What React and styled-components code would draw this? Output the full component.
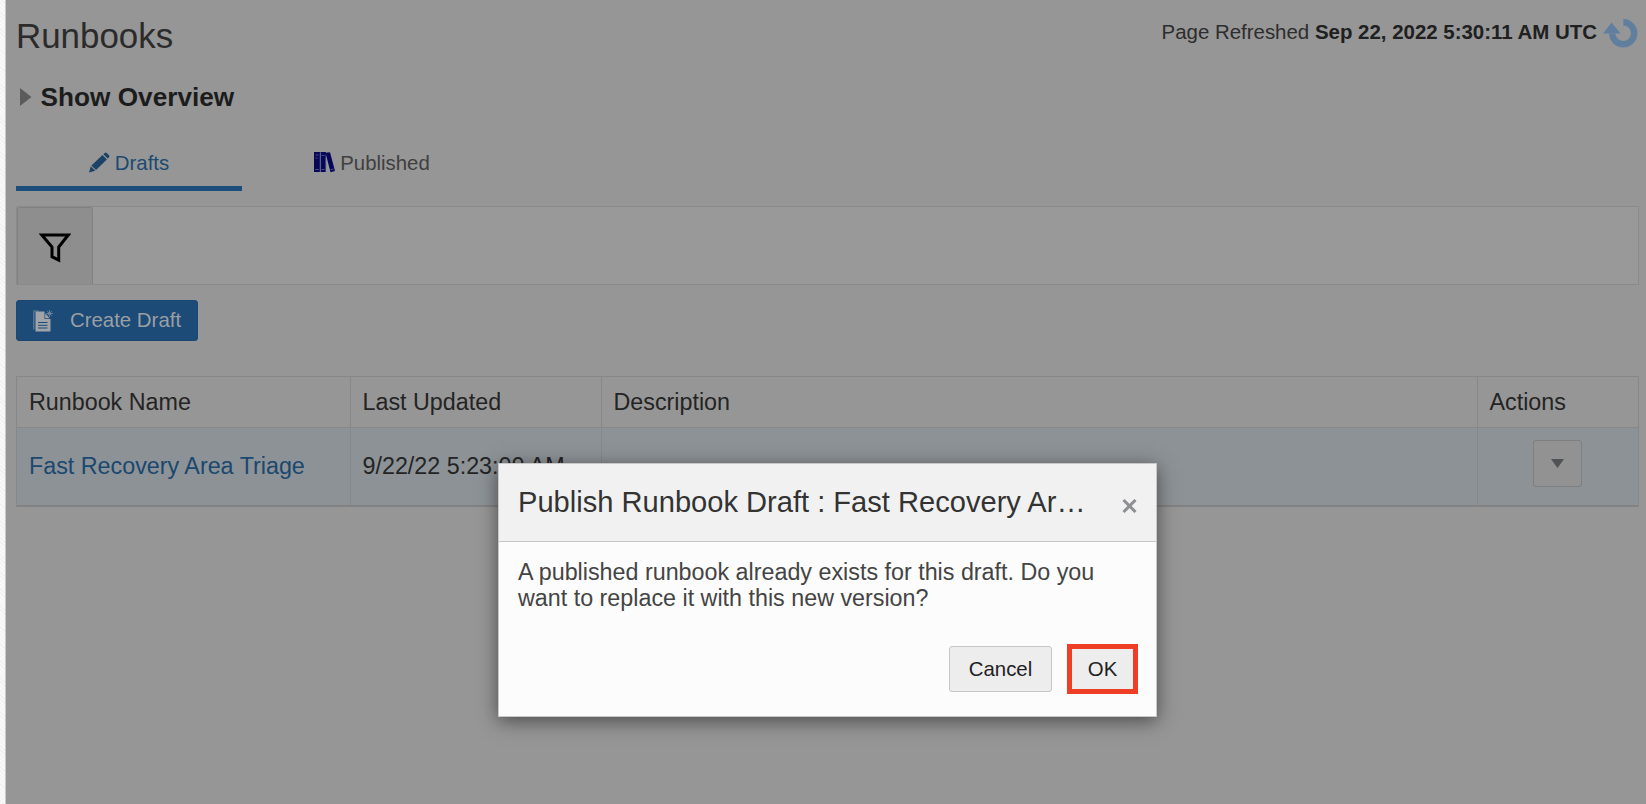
import React from "react";
import styled, { createGlobalStyle } from "styled-components";

const Global = createGlobalStyle`
  * { box-sizing: border-box; }
  html, body { margin: 0; height: 100%; overflow: hidden; background: #969696; }
  body, button { font-family: "Liberation Sans", Arial, sans-serif; }
`;

const Screen = styled.div`
  position: relative;
  display: flex;
  width: 1646px;
  height: 804px;
  background: #969696;
  overflow: hidden;
`;
const Gutter = styled.div`
  flex: 0 0 6px;
  background: repeating-linear-gradient(45deg, #f9f9f9 0 2px, #f1f1f1 2px 3px);
  border-right: 1px solid #c8c8c8;
`;
const Main = styled.main`
  flex: 1;
  display: flex;
  flex-direction: column;
  padding: 0 7px 0 10px;
`;
const Header = styled.header`
  display: flex;
  justify-content: space-between;
  height: 74px;
`;
const Title = styled.h1`
  margin: 16px 0 0;
  font-size: 34.9px;
  line-height: 40px;
  font-weight: 400;
  color: #2b2b2b;
`;
const Refreshed = styled.div`
  display: flex;
  height: 34px;
  margin-top: 16px;
  font-size: 20.45px;
  line-height: 32px;
  color: #2d2d2d;
  white-space: pre;
  b { color: #202020; }
  svg { margin: 2px 1px 0 6px; }
`;
const Overview = styled.div`
  display: flex;
  align-items: center;
  height: 46px;
  padding-left: 4px;
  gap: 8.6px;
  font-size: 26.2px;
  font-weight: 700;
  color: #1c1c1c;
`;
const Tabs = styled.nav`
  display: flex;
  height: 71px;
  padding-top: 22px;
  gap: 17px;
`;
const Tab = styled.div`
  display: flex;
  justify-content: center;
  width: 226px;
  height: 49px;
  padding: 9px 0 0;
  gap: 5px;
  font-size: 20.4px;
  line-height: 25px;
  color: ${(p) => (p.$active ? "#1c4a70" : "#404040")};
  border-bottom: 5px solid ${(p) => (p.$active ? "#1c4e7c" : "transparent")};
  svg { margin-top: 1px; }
`;
const FilterBar = styled.div`
  display: flex;
  flex: none;
  height: 79px;
  margin-top: 15px;
  border: 1px solid #8a8a8a;
  background: #999;
`;
const FilterButton = styled.div`
  display: flex;
  width: 76px;
  padding-top: 3px;
  align-items: center;
  justify-content: center;
  background: #8e8e8e;
  border: 1px solid #818181;
  border-bottom: 0;
  border-radius: 3px 3px 0 0;
`;
const CreateButton = styled.button`
  display: flex;
  align-items: center;
  width: 182px;
  height: 41px;
  margin: 15px 0 0;
  padding: 0 0 0 16px;
  gap: 17px;
  border: 1px solid #1a4772;
  border-radius: 3px;
  background: #1c4b77;
  color: #9b9fa3;
  font-size: 20.4px;
  white-space: nowrap;
`;
const Table = styled.div`
  margin-top: 35px;
  border: 1px solid #878787;
  border-bottom: 2px solid #828282;
`;
const Row = styled.div`
  display: grid;
  grid-template-columns: 333.5px 251px 876px 1fr;
  height: ${(p) => (p.$head ? 51 : 77)}px;
  background: ${(p) => (p.$head ? "#969696" : "#8d9296")};
  border-bottom: ${(p) => (p.$head ? "1px solid #878787" : "0")};
`;
const Cell = styled.div`
  display: flex;
  align-items: center;
  justify-content: ${(p) => (p.$center ? "center" : "flex-start")};
  padding: 0 12px;
  border-right: 1px solid #868788;
  font-size: 23.3px;
  white-space: nowrap;
  color: ${(p) => (p.$link ? "#1a486f" : "#242424")};
  &:last-child { border-right: 0; }
`;
const MenuButton = styled.button`
  display: flex;
  align-items: center;
  justify-content: center;
  width: 49px;
  height: 47px;
  margin-bottom: 6px;
  padding: 0;
  border: 1px solid #7f7f7f;
  border-radius: 3px;
  background: #929292;
`;
const Dialog = styled.section`
  position: absolute;
  left: 498px;
  top: 463px;
  width: 659px;
  height: 254px;
  border: 1px solid #c8c8c8;
  background: #fcfcfc;
  box-shadow: 0 4px 18px rgba(0, 0, 0, 0.5);
`;
const DialogHeader = styled.div`
  display: flex;
  height: 78px;
  padding: 0 19px;
  justify-content: space-between;
  border-bottom: 1px solid #c7c7c7;
  background: #f1f1f1;
`;
const DialogTitle = styled.h2`
  margin: 21px 0 0;
  font-size: 29.1px;
  line-height: 34px;
  font-weight: 400;
  color: #333;
  white-space: nowrap;
`;
const Close = styled.svg`
  margin-top: 35px;
`;
const Message = styled.p`
  margin: 17px 19px 0;
  height: 87px;
  font-size: 23.3px;
  line-height: 26px;
  color: #444;
  white-space: nowrap;
`;
const Actions = styled.div`
  display: flex;
  align-items: center;
  justify-content: flex-end;
  gap: 15px;
  height: 50px;
  margin-top: -2px;
  padding-right: 18px;
`;
const DialogButton = styled.button`
  width: ${(p) => (p.$primary ? 71 : 103)}px;
  height: ${(p) => (p.$primary ? 50 : 46)}px;
  padding: 0;
  border: ${(p) => (p.$primary ? "5px solid #ee3f26" : "1px solid #c6c6c6")};
  border-radius: ${(p) => (p.$primary ? 0 : 3)}px;
  background: #ededed;
  color: #222;
  font-size: 20.4px;
`;

const columns = ["Runbook Name", "Last Updated", "Description", "Actions"];

const RefreshIcon = () => (
  <svg width="35" height="30" viewBox="0 0 35 30">
    <path d="M20.3 4.2A11 11 0 1 1 9.2 15.5" fill="none" stroke="#607f9e" strokeWidth="6.4" />
    <path d="M0 15.5L8.6 4.5l9 11z" fill="#607f9e" />
  </svg>
);
const PencilIcon = () => (
  <svg width="21" height="21" viewBox="0 0 21 21" fill="#1b4368">
    <path d="M0 20.5L1.8 14.3 6.3 18.8z" />
    <path d="M2.4 13.5L13.5 3l4.4 4.4L7 18z" />
    <path d="M14.4 2.2L15.7.9Q16.7 0 17.7 1L20 3.3Q21 4.2 20 5.2L18.7 6.5z" />
  </svg>
);
const BooksIcon = () => (
  <svg width="21" height="21" viewBox="0 0 21 21">
    <path d="M0 0h6v20H0zM6.5 0h5.3v20H6.5zM11.5 .8l4.5-.6L21 19l-4.5 1.3z" fill="#07075a" />
    <path d="M1.5 3h3M1.5 6h2M1 17.5h4M7.5 3.5h3M7.5 17.5h3M16.5 17.7l3-.7" stroke="#66669a" strokeWidth=".7" />
    <path d="M6.2 1v19M12 5v15" stroke="#777797" strokeWidth=".6" />
  </svg>
);
const FilterIcon = () => (
  <svg width="32" height="30" viewBox="0 0 32 30">
    <path d="M2.8 2h26.4L19.7 14v13L13 23.7V14z" fill="none" stroke="#000" strokeWidth="3" />
  </svg>
);
const DraftIcon = () => (
  <svg width="20" height="22" viewBox="0 0 20 22">
    <path d="M.8 19.5V1h5" fill="none" stroke="#607f9a" strokeWidth="1.2" />
    <path d="M2.5 1.5h9v7.5h6v12.5h-15z" fill="#a0a4a8" />
    <path d="M12.2 3.5l4.5 4.7h-4.5z" fill="#a0a4a8" />
    <path d="M16.5 0v7M13 3.5h7M14.3 1.3l4.4 4.4M18.7 1.3l-4.4 4.4" stroke="#71889f" strokeWidth=".9" />
    <path d="M5 12.5h9.5M5 15.3h9.5M5 18h9.5" stroke="#1c4b77" strokeWidth="1" />
  </svg>
);

export default function App() {
  return (
    <Screen>
      <Global />
      <Gutter />
      <Main>
        <Header>
          <Title>Runbooks</Title>
          <Refreshed>
            <span>Page Refreshed <b>Sep 22, 2022 5:30:11 AM UTC</b></span>
            <RefreshIcon />
          </Refreshed>
        </Header>
        <Overview>
          <svg width="12" height="20" viewBox="0 0 12 20"><path d="M0 1l11.5 9L0 19z" fill="#5b5b5b" /></svg>
          Show Overview
        </Overview>
        <Tabs>
          <Tab $active><PencilIcon />Drafts</Tab>
          <Tab><BooksIcon />Published</Tab>
        </Tabs>
        <FilterBar><FilterButton><FilterIcon /></FilterButton></FilterBar>
        <CreateButton><DraftIcon />Create Draft</CreateButton>
        <Table>
          <Row $head>{columns.map((name) => <Cell key={name}>{name}</Cell>)}</Row>
          <Row>
            <Cell $link>Fast Recovery Area Triage</Cell>
            <Cell>9/22/22 5:23:00 AM</Cell>
            <Cell />
            <Cell $center>
              <MenuButton><svg width="13" height="9"><path d="M0 0h13L6.5 9z" fill="#505255" /></svg></MenuButton>
            </Cell>
          </Row>
        </Table>
      </Main>
      <Dialog>
        <DialogHeader>
          <DialogTitle>Publish Runbook Draft : Fast Recovery Ar…</DialogTitle>
          <Close width="15" height="14" viewBox="0 0 15 14"><path d="M1.5 1l12 12M13.5 1l-12 12" stroke="#8d8f92" strokeWidth="3" /></Close>
        </DialogHeader>
        <Message>A published runbook already exists for this draft. Do you<br />want to replace it with this new version?</Message>
        <Actions>
          <DialogButton>Cancel</DialogButton>
          <DialogButton $primary>OK</DialogButton>
        </Actions>
      </Dialog>
    </Screen>
  );
}
